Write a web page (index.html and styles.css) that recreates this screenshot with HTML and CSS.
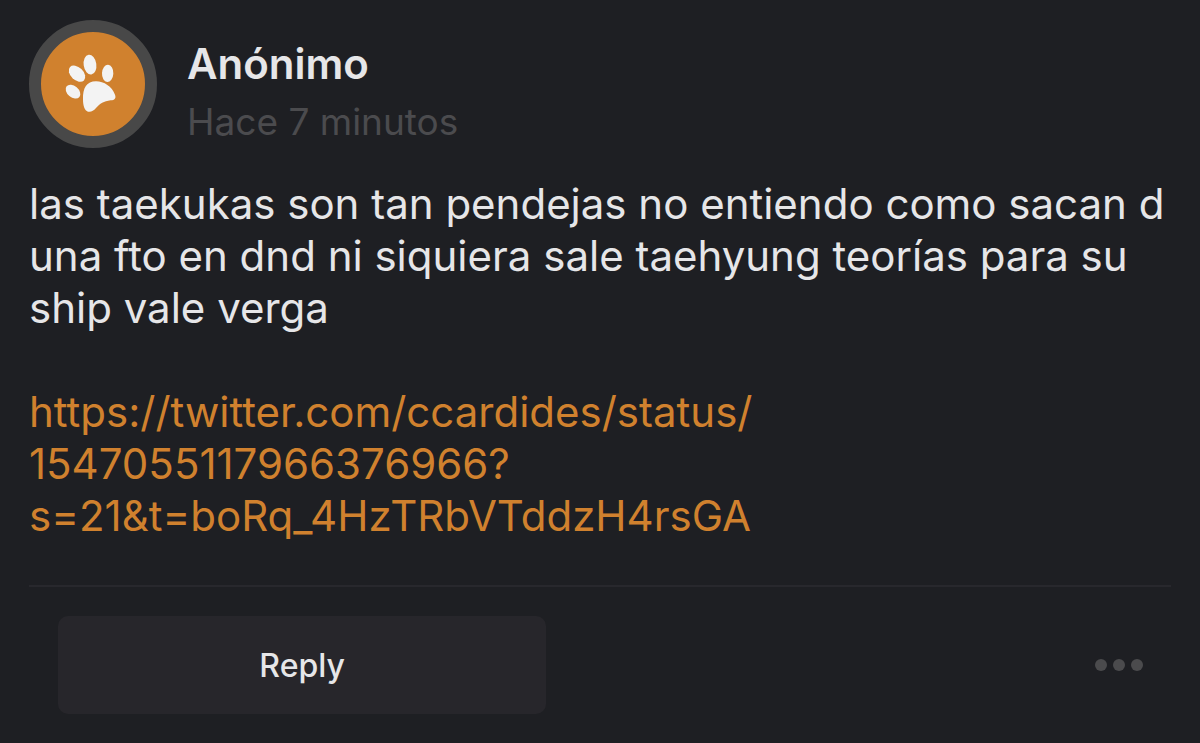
FILE: index.html
```html
<!DOCTYPE html>
<html lang="es">
<head>
    <meta charset="UTF-8">
    <meta name="viewport" content="width=device-width, initial-scale=1.0">
    <title>Anónimo</title>
    <link rel="stylesheet" href="styles.css">
</head>
<body>
    <article class="post">
        <header class="post-header">
            <div class="avatar">
                <svg class="paw" viewBox="63 66 312 312" aria-hidden="true">
                    <ellipse cx="210" cy="164" rx="19" ry="30" transform="rotate(-8 210 164)"/>
                    <ellipse cx="263" cy="190" rx="17" ry="26" transform="rotate(3 263 190)"/>
                    <ellipse cx="171" cy="191" rx="19" ry="29" transform="rotate(-46 171 191)"/>
                    <ellipse cx="159" cy="245" rx="17" ry="25" transform="rotate(-50 159 245)"/>
                    <path d="M228 214C252 214 276 230 285 254C289 265 284 270 272 271C251 274 240 281 228 294C220 303 213 307 204 305C194 302 189 288 189 268C188 234 200 214 228 214Z"/>
                </svg>
            </div>
            <div class="author">
                <h1 class="author-name">Anónimo</h1>
                <p class="post-date">Hace 7 minutos</p>
            </div>
        </header>

        <div class="post-body">
            <p>las taekukas son tan pendejas no entiendo como sacan d<br>una fto en dnd ni siquiera sale taehyung teorías para su<br>ship vale verga</p>
            <p><a class="post-link" href="https://twitter.com/ccardides/status/1547055117966376966?s=21&amp;t=boRq_4HzTRbVTddzH4rsGA">https://twitter.com/ccardides/status/<br>1547055117966376966?<br>s=21&amp;t=boRq_4HzTRbVTddzH4rsGA</a></p>
        </div>

        <footer class="post-actions">
            <button type="button" class="reply-button">Reply</button>
            <button type="button" class="more-button" aria-label="Más opciones">
                <span class="dot"></span>
                <span class="dot"></span>
                <span class="dot"></span>
            </button>
        </footer>
    </article>
</body>
</html>
```

FILE: styles.css
```css
* {
    margin: 0;
    padding: 0;
    box-sizing: border-box;
}

body {
    font-family: Inter, 'Liberation Sans', sans-serif;
    background: #1e1f23;
    min-height: 100vh;
    color: #e6e6e8;
}

.post {
    padding: 20px 29px 28px;
}

.post-header {
    display: flex;
    align-items: flex-start;
    gap: 30px;
    margin-bottom: 30px;
}

.avatar {
    display: flex;
    width: 128px;
    height: 128px;
    border: 12px solid #484848;
    border-radius: 50%;
    background: #d0812e;
}

.paw {
    width: 100%;
    height: 100%;
    fill: #f3f3f3;
}

.author {
    padding-top: 18px;
}

.author-name {
    font-size: 42px;
    font-weight: 600;
    line-height: 52px;
    margin-bottom: 8px;
}

.post-date {
    font-size: 37px;
    line-height: 48px;
    color: #4b4b4e;
}

.post-body {
    font-size: 42px;
    line-height: 52px;
    padding-bottom: 43px;
    border-bottom: 2px solid #28282d;
}

.post-body p + p {
    margin-top: 52px;
}

.post-link {
    color: #d0812e;
    text-decoration: none;
}

.post-link:hover {
    text-decoration: underline;
}

.post-actions {
    display: flex;
    align-items: center;
    justify-content: space-between;
    padding: 29px 28px 0 29px;
}

.reply-button {
    width: 45%;
    height: 98px;
    border: none;
    border-radius: 10px;
    background: #27262b;
    color: #e6e6e8;
    font-family: inherit;
    font-size: 32px;
    font-weight: 500;
    cursor: pointer;
}

.more-button {
    display: flex;
    gap: 6px;
    padding: 20px 0;
    border: none;
    background: none;
    cursor: pointer;
}

.dot {
    width: 12px;
    height: 12px;
    border-radius: 50%;
    background: #4b4b4d;
}
```
